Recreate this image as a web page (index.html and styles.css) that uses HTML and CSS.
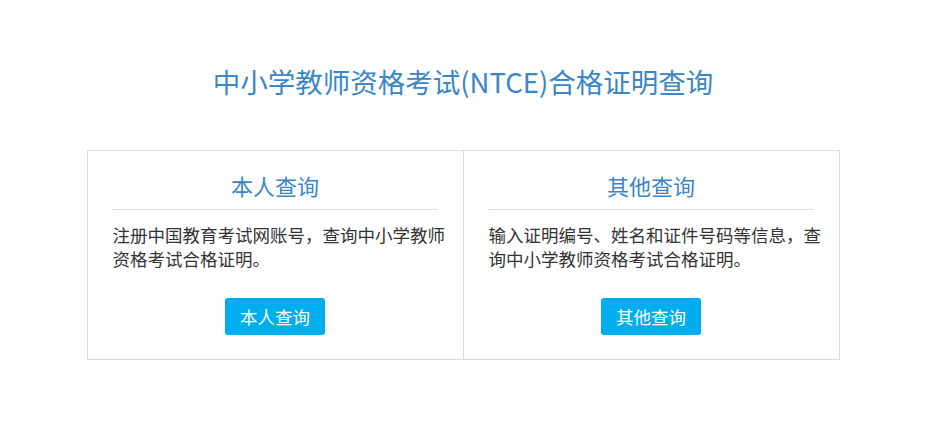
FILE: index.html
```html
<!DOCTYPE html>
<html lang="zh-CN">
<head>
    <meta charset="UTF-8">
    <meta name="viewport" content="width=device-width, initial-scale=1.0">
    <title>中小学教师资格考试(NTCE)合格证明查询</title>
    <link rel="stylesheet" href="styles.css">
</head>
<body>
    <div class="page">
        <h1 class="page-title">中小学教师资格考试(NTCE)合格证明查询</h1>

        <div class="query-box">
            <div class="query-col">
                <h2 class="query-title">本人查询</h2>
                <p class="query-desc">注册中国教育考试网账号，查询中小学教师资格考试合格证明。</p>
                <a class="query-btn" href="#">本人查询</a>
            </div>
            <div class="query-col">
                <h2 class="query-title">其他查询</h2>
                <p class="query-desc">输入证明编号、姓名和证件号码等信息，查询中小学教师资格考试合格证明。</p>
                <a class="query-btn" href="#">其他查询</a>
            </div>
        </div>
    </div>
</body>
</html>
```

FILE: styles.css
```css
body {
    margin: 0;
    padding: 0;
    background: #fff;
    font-family: "Noto Sans CJK SC", "Noto Sans", sans-serif;
    color: #333;
}

.page {
    width: 926px;
}

.page-title {
    margin: 0;
    padding-top: 61px;
    font-size: 27.5px;
    line-height: 40px;
    font-weight: normal;
    color: #3a86c8;
    text-align: center;
}

.query-box {
    width: 751px;
    margin: 49px auto 0;
    border: 1px solid #dcdcdc;
    display: flex;
}

.query-col {
    flex: 1;
    padding: 16px 25px 24px;
    text-align: center;
}

.query-col + .query-col {
    border-left: 1px solid #dcdcdc;
}

.query-title {
    margin: 0;
    padding-bottom: 6px;
    font-size: 22px;
    line-height: 36px;
    font-weight: normal;
    color: #3a86c8;
    border-bottom: 1px solid #dcdcdc;
}

.query-desc {
    margin: 13px -10px 0 0;
    font-size: 17.5px;
    line-height: 24px;
    text-align: left;
    color: #333;
}

.query-btn {
    display: inline-block;
    margin-top: 27px;
    width: 100px;
    height: 37px;
    line-height: 37px;
    border-radius: 3px;
    background: #00aeef;
    color: #fff;
    font-size: 17.5px;
    text-decoration: none;
}
```
